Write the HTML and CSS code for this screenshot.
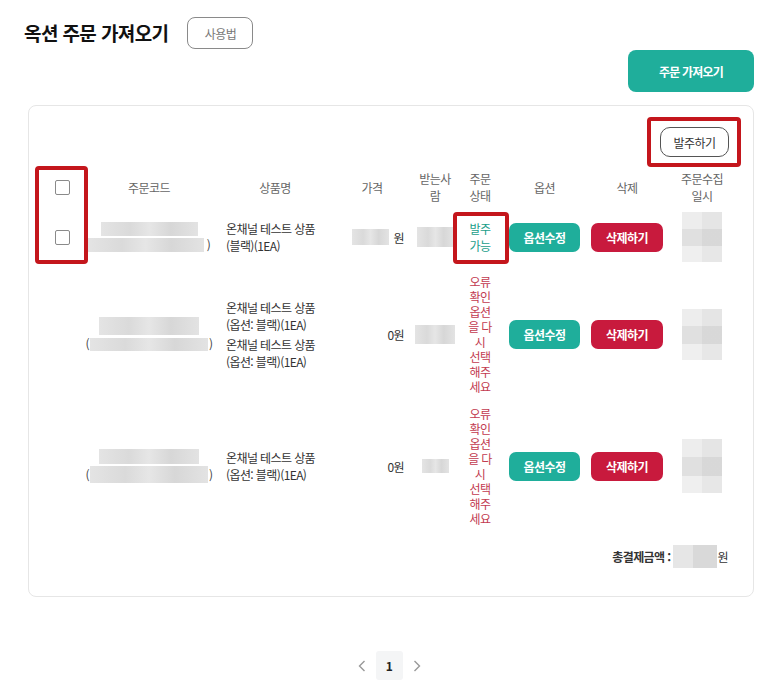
FILE: index.html
```html
<!DOCTYPE html>
<html lang="ko">
<head>
<meta charset="utf-8">
<title>옥션 주문 가져오기</title>
<link rel="stylesheet" href="styles.css">
</head>
<body>
<div class="page">
  <header class="title-row">
    <h1 class="title">옥션 주문 가져오기</h1>
    <button class="btn-guide">사용법</button>
  </header>
  <div class="action-row">
    <button class="btn-import">주문 가져오기</button>
  </div>

  <section class="card">
    <div class="toolbar">
      <div class="mark mark-order">
        <button class="btn-order">발주하기</button>
      </div>
    </div>

    <div class="row head">
      <div class="cell c-check"><span class="checkbox"></span></div>
      <div class="cell c-code">주문코드</div>
      <div class="cell c-name">상품명</div>
      <div class="cell c-price">가격</div>
      <div class="cell c-recv">받는사람</div>
      <div class="cell c-status">주문상태</div>
      <div class="cell c-opt">옵션</div>
      <div class="cell c-del">삭제</div>
      <div class="cell c-date">주문수집일시</div>
    </div>

    <div class="row data">
      <div class="cell c-check"><span class="checkbox"></span></div>
      <div class="cell c-code">
        <span class="blur code-a1"></span>
        <span class="code-line"><span class="blur code-b1"></span><span class="paren">)</span></span>
      </div>
      <div class="cell c-name">
        <div class="item">온채널 테스트 상품<br>(블랙)(1EA)</div>
      </div>
      <div class="cell c-price"><span class="price"><span class="blur price-1"></span>원</span></div>
      <div class="cell c-recv"><span class="blur recv-1"></span></div>
      <div class="cell c-status"><span class="ok">발주가능</span></div>
      <div class="cell c-opt"><button class="btn-opt">옵션수정</button></div>
      <div class="cell c-del"><button class="btn-del">삭제하기</button></div>
      <div class="cell c-date"><span class="mosaic date-1"></span></div>
    </div>

    <div class="row data">
      <div class="cell c-check"></div>
      <div class="cell c-code">
        <span class="blur code-a2"></span>
        <span class="code-line"><span class="paren">(</span><span class="blur code-b2"></span><span class="paren">)</span></span>
      </div>
      <div class="cell c-name">
        <div class="item">온채널 테스트 상품<br>(옵션: 블랙)(1EA)</div>
        <div class="item">온채널 테스트 상품<br>(옵션: 블랙)(1EA)</div>
      </div>
      <div class="cell c-price"><span class="price">0원</span></div>
      <div class="cell c-recv"><span class="blur recv-2"></span></div>
      <div class="cell c-status"><span class="err">오류확인<br>옵션을 다시<br>선택해주세요</span></div>
      <div class="cell c-opt"><button class="btn-opt">옵션수정</button></div>
      <div class="cell c-del"><button class="btn-del">삭제하기</button></div>
      <div class="cell c-date"><span class="mosaic date-2"></span></div>
    </div>

    <div class="row data">
      <div class="cell c-check"></div>
      <div class="cell c-code">
        <span class="blur code-a3"></span>
        <span class="code-line"><span class="paren">(</span><span class="blur code-b3"></span><span class="paren">)</span></span>
      </div>
      <div class="cell c-name">
        <div class="item">온채널 테스트 상품<br>(옵션: 블랙)(1EA)</div>
      </div>
      <div class="cell c-price"><span class="price">0원</span></div>
      <div class="cell c-recv"><span class="blur recv-3"></span></div>
      <div class="cell c-status"><span class="err">오류확인<br>옵션을 다시<br>선택해주세요</span></div>
      <div class="cell c-opt"><button class="btn-opt">옵션수정</button></div>
      <div class="cell c-del"><button class="btn-del">삭제하기</button></div>
      <div class="cell c-date"><span class="mosaic date-3"></span></div>
    </div>

    <div class="total">
      <span class="total-label">총결제금액 :</span>
      <span class="blur total-amount"></span>
      <span class="total-unit">원</span>
    </div>

    <div class="mark mark-check"></div>
    <div class="mark mark-status"></div>
  </section>

  <nav class="pager">
    <span class="chev"><svg width="8" height="12" viewBox="0 0 8 12"><polyline points="6.5,1 1.5,6 6.5,11" fill="none" stroke="#999" stroke-width="1.4"/></svg></span>
    <span class="page-num">1</span>
    <span class="chev"><svg width="8" height="12" viewBox="0 0 8 12"><polyline points="1.5,1 6.5,6 1.5,11" fill="none" stroke="#999" stroke-width="1.4"/></svg></span>
  </nav>
</div>
</body>
</html>
```

FILE: styles.css
```css
* { box-sizing: border-box; margin: 0; padding: 0; }

body {
  margin: 0;
  background: #fff;
  color: #333;
  font-family: "Noto Sans CJK KR", "Noto Sans", sans-serif;
  font-size: 12px;
  letter-spacing: -0.6px;
}

button { font-family: inherit; letter-spacing: inherit; cursor: pointer; }

.page { padding: 17px 30px 0 24px; }

.title-row { display: flex; align-items: center; height: 32px; }
.title {
  font-size: 19px;
  font-weight: 700;
  letter-spacing: -0.6px;
  color: #111;
  line-height: 32px;
}
.btn-guide {
  margin-left: 19px;
  width: 66px;
  height: 32px;
  border: 1px solid #8a8a8a;
  border-radius: 8px;
  background: #fff;
  color: #777;
  font-size: 12px;
}

.action-row { display: flex; justify-content: flex-end; margin-top: 1px; }
.btn-import {
  width: 126px;
  height: 42px;
  border: 0;
  border-radius: 8px;
  background: #1fae9b;
  color: #fff;
  font-size: 12px;
  font-weight: 700;
  letter-spacing: -0.8px;
}

.card {
  position: relative;
  margin: 13px 0 0 4px;
  border: 1px solid #e6e6e6;
  border-radius: 8px;
  padding: 11px 0 28px;
}

.toolbar { display: flex; justify-content: flex-end; padding-right: 12px; }

.mark { border: 4px solid #c4161c; border-radius: 4px; }
.mark-order { padding: 6px 8px 6px 9px; }
.mark-check { position: absolute; left: 6px; top: 60px; width: 53px; height: 98px; }
.mark-status { position: absolute; left: 424px; top: 106px; width: 56px; height: 52px; }

.btn-order {
  width: 69px;
  height: 30px;
  border: 1px solid #555;
  border-radius: 10px;
  background: #fff;
  color: #333;
  font-size: 12px;
}

.row {
  display: grid;
  grid-template-columns: 59px 122px 130px 64px 62px 28px 92px 82px 68px;
  align-items: center;
}

.cell {
  display: flex;
  flex-direction: column;
  align-items: center;
  justify-content: center;
  text-align: center;
}

.head { margin-top: 3px; padding-bottom: 2px; color: #666; line-height: 17px; }
.data { padding: 6px 0; line-height: 17px; }
.data:first-of-type { padding-top: 8px; }

.c-check { align-items: flex-start; padding-left: 26px; }
.c-recv { padding: 0 12px; }
.c-opt { padding-left: 9px; }
.c-date { padding: 0 9px; }

.data .c-name { align-items: flex-start; text-align: left; padding-left: 16px; }
.data .c-price { align-items: flex-end; }

.checkbox {
  display: block;
  width: 15px;
  height: 15px;
  border: 1px solid #8a8a8a;
  border-radius: 2px;
  background: #fff;
}

.item { line-height: 17px; }
.item + .item { margin-top: 3px; }

.code-line { display: flex; align-items: center; margin-top: 2px; line-height: 14px; }
.paren { color: #444; padding: 0 1px; }

.blur {
  display: inline-block;
  background: linear-gradient(90deg, #e4e4e4, #dadada 30%, #e6e6e6 50%, #d7d7d7 72%, #e3e3e3);
}
.code-a1 { width: 97px; height: 14px; }
.code-b1 { width: 117px; height: 14px; margin-right: 2px; }
.code-a2 { width: 100px; height: 18px; }
.code-b2 { width: 118px; height: 13px; }
.code-a3 { width: 100px; height: 15px; }
.code-b3 { width: 118px; height: 17px; }

.price { display: inline-flex; align-items: center; color: #333; }
.price-1 { width: 37px; height: 16px; margin-right: 5px; }

.recv-1 { width: 37px; height: 20px; }
.recv-2 { width: 40px; height: 19px; }
.recv-3 { width: 27px; height: 14px; }

.ok { color: #1a9e8a; line-height: 17px; }
.err { color: #c23a4f; line-height: 15px; }

.btn-opt, .btn-del {
  height: 29px;
  border: 0;
  border-radius: 7px;
  color: #fff;
  font-size: 12px;
  font-weight: 700;
}
.btn-opt { width: 71px; background: #1fae9b; }
.btn-del { width: 72px; background: #c81a3d; }

.mosaic {
  display: block;
  width: 40px;
  background:
    linear-gradient(90deg, rgba(255,255,255,0) 0 50%, rgba(0,0,0,0.035) 50% 100%),
    linear-gradient(180deg, #ededed 0 34%, #e0e0e0 34% 68%, #efefef 68% 100%);
}
.date-1 { height: 50px; }
.date-2 { height: 51px; }
.date-3 { height: 54px; }

.total {
  display: flex;
  justify-content: flex-end;
  align-items: center;
  margin-top: 13px;
  padding-right: 25px;
}
.total-label { font-weight: 700; color: #333; margin-right: 2px; }
.total-amount {
  width: 44px;
  height: 23px;
  margin-right: 1px;
  background: linear-gradient(90deg, #e6e6e6 0 45%, #d9d9d9 45% 100%);
}
.total-unit { color: #333; }

.pager {
  display: flex;
  justify-content: center;
  align-items: center;
  gap: 10px;
  margin-top: 54px;
}
.chev { display: flex; }
.page-num {
  width: 27px;
  height: 29px;
  display: flex;
  align-items: center;
  justify-content: center;
  background: #f4f5f6;
  border-radius: 3px;
  color: #222;
  font-weight: 700;
  font-size: 12px;
}
```
